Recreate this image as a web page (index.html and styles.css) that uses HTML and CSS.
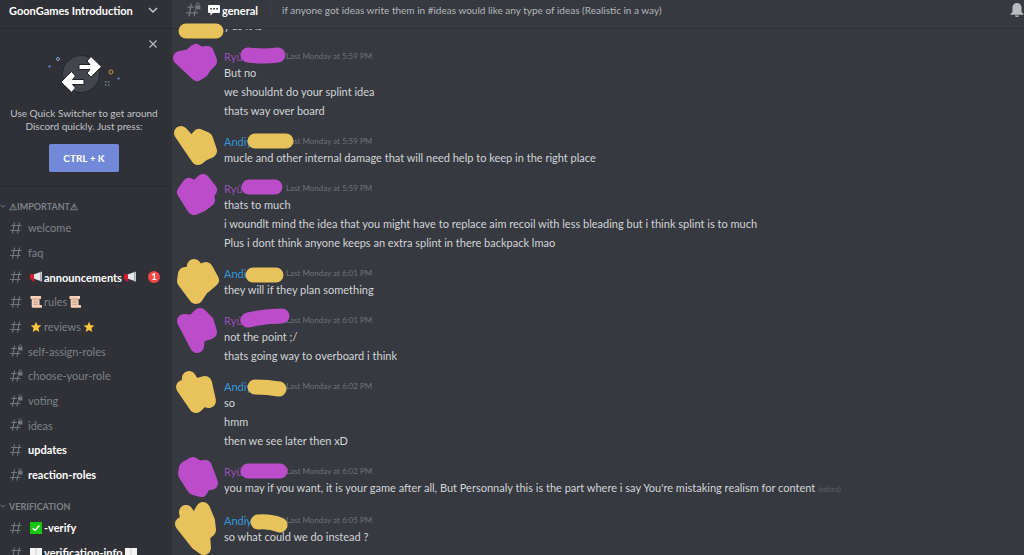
FILE: index.html
```html
<!DOCTYPE html>
<html lang="en">
<head>
    <meta charset="UTF-8">
    <meta name="viewport" content="width=device-width, initial-scale=1.0">
    <title>general - GoonGames Introduction</title>
    <link rel="stylesheet" href="styles.css">
</head>
<body>
    <!-- shared icons -->
    <svg class="sprite" aria-hidden="true">
        <symbol id="hash" viewBox="0 0 14 14">
            <path d="M5.500 1.500L3.500 12.500M10.500 1.500L8.500 12.500M2 4.500H12.500M1 9.500H11.500" fill="none" stroke="currentColor" stroke-width="1.200"/>
        </symbol>
        <symbol id="hash-lock" viewBox="0 0 14 14">
            <path d="M5.500 1.500L3.500 12.500M9 7L8 12.500M2 4.500H8M1 9.500H11.500" fill="none" stroke="currentColor" stroke-width="1.200"/>
            <path d="M9 3h4.500v3.500H9z" fill="currentColor"/>
            <path d="M10 3V2a1.200 1.200 0 0 1 2.400 0v1" fill="none" stroke="currentColor" stroke-width=".8"/>
        </symbol>
        <symbol id="megaphone" viewBox="0 0 12 12">
            <path d="M3.500 3.500L10.500 1V10L3.500 7.500z" fill="#e6e7e8"/>
            <path d="M0 3.300H4V8H0z" fill="#e01b2c"/>
            <path d="M1 7.500h3l.8 3H2z" fill="#be1931"/>
            <path d="M10.500 .800H12v9.600h-1.500z" fill="#c3cad0"/>
        </symbol>
        <symbol id="scroll" viewBox="0 0 12 12">
            <path d="M.5 0h10.500v3H9.500V9h1.500a1.400 1.400 0 0 1 0 2.800H3A1.500 1.500 0 0 1 1.700 10V3H.5z" fill="#f5d3b8"/>
            <path d="M3.500 5h4.500M3.500 6.800h4.500M3.500 8.600h4.500M2 3H9.500" stroke="#a9826a" stroke-width=".6"/>
        </symbol>
        <symbol id="star" viewBox="0 0 12 12">
            <path d="M6 .7l1.500 3.600 3.900.3-3 2.500.9 3.900L6 8.900 2.700 11l.9-3.900-3-2.500 3.900-.3z" fill="#ffc53d"/>
        </symbol>
        <symbol id="check" viewBox="0 0 12 12">
            <path d="M0 0h12v12H0z" fill="#16c60c"/>
            <path d="M2.800 6.200l2.200 2.300 4.300-5" fill="none" stroke="#fff" stroke-width="1.500"/>
        </symbol>
        <symbol id="book" viewBox="0 0 12 12">
            <path d="M0 1h5.500l.5.600.5-.600H12v10H0z" fill="#f4f4f4"/>
            <path d="M6 1.500V11" stroke="#c4c8cc" stroke-width=".8"/>
        </symbol>
        <symbol id="speech" viewBox="0 0 12 12">
            <path d="M1 1h10a1 1 0 0 1 1 1v6a1 1 0 0 1-1 1H5L2.500 11.500V9H1a1 1 0 0 1-1-1V2a1 1 0 0 1 1-1z" fill="#fff"/>
            <path d="M2.300 4h1.500v1.500H2.300zM5.300 4h1.500v1.500H5.300zM8.300 4h1.500v1.500H8.300z" fill="#222428"/>
        </symbol>
        <symbol id="chevron" viewBox="0 0 10 10">
            <path d="M1 3l4 4 4-4" fill="none" stroke="currentColor" stroke-width="1.500"/>
        </symbol>
    </svg>

    <div class="app">
        <aside class="sidebar">
            <button class="server-header">
                <span>GoonGames Introduction</span>
                <svg class="server-arrow"><use href="#chevron"/></svg>
            </button>

            <section class="switcher">
                <button class="close-btn" aria-label="Close">
                    <svg width="8" height="8" viewBox="0 0 8 8"><path d="M.5 .5l7 7M7.500 .5l-7 7" stroke="currentColor" stroke-width="1.200"/></svg>
                </button>
                <svg class="switcher-art" viewBox="0 0 76 42">
                    <circle cx="35" cy="21" r="18.500" fill="#42454b" stroke="#25272b"/>
                    <path d="M33 11.500h11l-3-3.500 4-4.500 10.500 10.300L45 24l-4-4 3-3.500H33z" fill="#fff" stroke="#202225"/>
                    <path d="M38 26.500H26.500l3-3.500-4-4.500L15 29l10.500 10.300 4-4.300-3-3.500H38z" fill="#fff" stroke="#202225"/>
                    <circle cx="12" cy="6" r="1.500" fill="none" stroke="#7fa8d0"/>
                    <circle cx="65" cy="19" r="2" fill="none" stroke="#c99a3c"/>
                    <path d="M3.500 12v3M2 13.500h3M72.500 24v3M71 25.500h3" stroke="#5873b4"/>
                    <path d="M59 29h1.500M62 29h1.500M59 32h1.500M62 32h1.500" stroke="#7fa8d0"/>
                </svg>
                <p>Use Quick Switcher to get around Discord quickly. Just press:</p>
                <button class="key-btn">CTRL + K</button>
            </section>

            <nav>
                <h2 class="category"><svg><use href="#chevron"/></svg>⚠IMPORTANT⚠</h2>
                <ul class="channels">
                    <li><a href="#"><svg class="hash"><use href="#hash"/></svg>welcome</a></li>
                    <li><a href="#"><svg class="hash"><use href="#hash"/></svg>faq</a></li>
                    <li><a href="#" class="unread"><svg class="hash"><use href="#hash"/></svg><svg class="emoji"><use href="#megaphone"/></svg>announcements<svg class="emoji"><use href="#megaphone"/></svg><span class="badge">1</span></a></li>
                    <li><a href="#"><svg class="hash"><use href="#hash"/></svg><svg class="emoji"><use href="#scroll"/></svg>rules<svg class="emoji"><use href="#scroll"/></svg></a></li>
                    <li><a href="#"><svg class="hash"><use href="#hash"/></svg><svg class="emoji"><use href="#star"/></svg>reviews<svg class="emoji"><use href="#star"/></svg></a></li>
                    <li><a href="#"><svg class="hash"><use href="#hash-lock"/></svg>self-assign-roles</a></li>
                    <li><a href="#"><svg class="hash"><use href="#hash-lock"/></svg>choose-your-role</a></li>
                    <li><a href="#"><svg class="hash"><use href="#hash-lock"/></svg>voting</a></li>
                    <li><a href="#"><svg class="hash"><use href="#hash-lock"/></svg>ideas</a></li>
                    <li><a href="#" class="unread"><svg class="hash"><use href="#hash"/></svg>updates</a></li>
                    <li><a href="#" class="unread"><svg class="hash"><use href="#hash-lock"/></svg>reaction-roles</a></li>
                </ul>
                <h2 class="category"><svg><use href="#chevron"/></svg>VERIFICATION</h2>
                <ul class="channels">
                    <li><a href="#" class="unread"><svg class="hash"><use href="#hash"/></svg><svg class="emoji"><use href="#check"/></svg>-verify</a></li>
                    <li><a href="#" class="unread"><svg class="hash"><use href="#hash"/></svg><svg class="emoji"><use href="#book"/></svg>verification-info<svg class="emoji"><use href="#book"/></svg></a></li>
                </ul>
            </nav>
        </aside>

        <main class="chat">
            <header class="chat-header">
                <svg class="hash"><use href="#hash-lock"/></svg>
                <svg class="emoji"><use href="#speech"/></svg>
                <h1>general</h1>
                <p class="topic">if anyone got ideas write them in #ideas would like any type of ideas (Realistic in a way)</p>
                <button class="bell" aria-label="Notifications">
                    <svg width="14" height="14" viewBox="0 0 14 14"><path d="M7 0a4.500 4.500 0 0 1 4.500 4.500V9l2 2v.8H.5V11l2-2V4.500A4.500 4.500 0 0 1 7 0zM5 12.500h4a2 1.500 0 0 1-4 0z" fill="currentColor"/></svg>
                </button>
            </header>
            <svg class="scribble yellow top-mark"><path class="cover" d="M14 3H44"/></svg>

            <div class="messages">
                <article class="message">
                    <p>y as it is</p>
                </article>
                <article class="message">
                    <div class="meta"><span class="author ryu">Ryū</span><time>Last Monday at 5:59 PM</time></div>
                    <p>But no</p>
                    <p>we shouldnt do your splint idea</p>
                    <p>thats way over board</p>
                    <svg class="scribble purple"><path d="M8 9L18 7L24 2L28 5L35 4L38 12L33 17L30 22L25 25Z"/><path class="cover" d="M76 6Q91 8 106 6"/></svg>
                </article>
                <article class="message">
                    <div class="meta"><span class="author andiy">Andiy</span><time>Last Monday at 5:59 PM</time></div>
                    <p>mucle and other internal damage that will need help to keep in the right place</p>
                    <svg class="scribble yellow"><path d="M9 -1L26 24L31 20L38 17L34 5L27 2L20 11Z"/><path class="cover" d="M83 7H114"/></svg>
                </article>
                <article class="message">
                    <div class="meta"><span class="author ryu">Ryū</span><time>Last Monday at 5:59 PM</time></div>
                    <p>thats to much</p>
                    <p>i woundlt mind the idea that you might have to replace aim recoil with less bleading but i think splint is to much</p>
                    <p>Plus i dont think anyone keeps an extra splint in there backpack lmao</p>
                    <svg class="scribble purple"><path d="M12 11L17 4L24 7L31 0L38 9L35 13L36 19L29 24L22 27Z"/><path class="cover" d="M77 6H103"/></svg>
                </article>
                <article class="message">
                    <div class="meta"><span class="author andiy">Andiy</span><time>Last Monday at 6:01 PM</time></div>
                    <p>they will if they plan something</p>
                    <svg class="scribble yellow"><path d="M22 0L27 6L34 3L40 14L33 20L30 22L24 31L12 15L13 8L20 8Z"/><path class="cover" d="M81 9H104"/></svg>
                </article>
                <article class="message">
                    <div class="meta"><span class="author ryu">Ryū</span><time>Last Monday at 6:01 PM</time></div>
                    <p>not the point ;/</p>
                    <p>thats going way to overboard i think</p>
                    <svg class="scribble purple"><path d="M28 2L21 9L12 8L25 33L26 23L38 19L35 9Z"/><path class="cover" d="M76 7Q92 3 110 3"/></svg>
                </article>
                <article class="message">
                    <div class="meta"><span class="author andiy">Andiy</span><time>Last Monday at 6:02 PM</time></div>
                    <p>so</p>
                    <p>hmm</p>
                    <p>then we see later then xD</p>
                    <svg class="scribble yellow"><path d="M17 -1L22 7L33 4L37 22L31 20L24 27L11 8L16 8Z"/><path class="cover" d="M83 8Q96 8 107 10"/></svg>
                </article>
                <article class="message">
                    <div class="meta"><span class="author ryu">Ryū</span><time>Last Monday at 6:02 PM</time></div>
                    <p>you may if you want, it is your game after all, But Personnaly this is the part where i say You're mistaking realism for content <small>(edited)</small></p>
                    <svg class="scribble purple"><path d="M21 0L26 4L33 3L39 19L33 19L29 26L22 24L13 10L14 4Z"/><path class="cover" d="M76 7H108"/></svg>
                </article>
                <article class="message">
                    <div class="meta"><span class="author andiy">Andiy</span><time>Last Monday at 6:05 PM</time></div>
                    <p>so what could we do instead ?</p>
                    <svg class="scribble yellow"><path d="M14 -1L22 12L31 -4L36 8L37 17L31 22L32 35L25 30L10 11L16 10Z"/><path class="cover" d="M86 9Q98 8 108 12"/></svg>
                </article>
            </div>
        </main>
    </div>
</body>
</html>
```
FILE: styles.css
```css
:root {
    --sidebar-color: #2f3136;
    --chat-color: #36393f;
    --line-color: #27292d;
    --muted-color: #7e8288;
    --yellow: #e8c25a;
    --purple: #bc4dca;
}
* {
    box-sizing: border-box;
}
body {
    margin: 0;
    font-family: "Lato", "Liberation Sans", sans-serif;
    font-size: 11px;
    color: #d3d5d8;
    background: var(--chat-color);
}
h1, h2, p, ul {
    margin: 0;
    padding: 0;
}
button {
    padding: 0;
    border: 0;
    font: inherit;
    color: inherit;
    background: none;
    cursor: pointer;
}
.sprite {
    display: none;
}
.app {
    display: flex;
    height: 100vh;
    overflow: hidden;
}

/* sidebar */
.sidebar {
    flex: 0 0 172px;
    overflow: hidden;
    background: var(--sidebar-color);
}
.server-header {
    display: flex;
    align-items: center;
    justify-content: space-between;
    width: 100%;
    height: 29px;
    padding: 0 14px 8px 9px;
    border-bottom: 1px solid var(--line-color);
    font-weight: bold;
    color: #fff;
}
.server-arrow {
    width: 10px;
    height: 10px;
    color: #c4c6c9;
}
.switcher {
    position: relative;
    display: flex;
    flex-direction: column;
    align-items: center;
    height: 158px;
    padding: 24px 12px 0 8px;
    border-bottom: 1px solid var(--line-color);
    text-align: center;
}
.close-btn {
    position: absolute;
    top: 11px;
    right: 15px;
    display: flex;
    color: #b9bbbe;
}
.switcher-art {
    width: 76px;
    height: 42px;
}
.switcher p {
    margin: 12px 0 11px;
    font-size: 10px;
    line-height: 13px;
    color: #c2c4c8;
}
.key-btn {
    width: 70px;
    height: 28px;
    border-radius: 2px;
    font-size: 10px;
    font-weight: bold;
    color: #fff;
    background: #7289da;
}
.category {
    display: flex;
    align-items: center;
    height: 14px;
    margin-top: 12px;
    font-size: 9px;
    font-weight: bold;
    color: var(--muted-color);
}
.category svg {
    width: 6px;
    height: 6px;
    margin-right: 3px;
}
.channels {
    list-style: none;
    padding-top: 2px;
}
.channels li {
    height: 25px;
}
.channels li:nth-child(3n) {
    height: 24px;
}
.channels a {
    display: flex;
    align-items: center;
    height: 100%;
    padding: 0 12px 0 9px;
    color: var(--muted-color);
    text-decoration: none;
}
.channels .unread {
    font-weight: bold;
    color: #fff;
}
.hash {
    width: 14px;
    height: 14px;
    margin-right: 5px;
    color: #72767d;
}
.emoji {
    width: 12px;
    height: 12px;
    margin: 0 2px;
}
.badge {
    width: 12px;
    height: 12px;
    margin-left: auto;
    border-radius: 50%;
    font-size: 9px;
    line-height: 12px;
    text-align: center;
    background: #f04747;
}

/* chat */
.chat {
    position: relative;
    flex: 1;
    display: flex;
    flex-direction: column;
    min-width: 0;
}
.chat-header {
    display: flex;
    flex: 0 0 29px;
    align-items: center;
    padding: 0 0 8px 13px;
    border-bottom: 1px solid #2e3136;
    overflow: hidden;
}
.chat-header .hash {
    width: 16px;
    height: 16px;
}
.chat-header h1 {
    font-size: 11px;
    color: #fff;
}
.topic {
    flex: 1;
    margin-left: 12px;
    padding-left: 11px;
    border-left: 1px solid #3f4248;
    font-size: 10px;
    line-height: 16px;
    white-space: nowrap;
    color: #b4b7bb;
}
.bell {
    display: flex;
    color: #b9bbbe;
}
.messages {
    flex: 1;
    display: flex;
    flex-direction: column;
    justify-content: flex-end;
    gap: 14px;
    padding-bottom: 9px;
    overflow: hidden;
}
.message {
    position: relative;
    padding-left: 52px;
}
.message p {
    line-height: 19px;
}
.message small {
    font-size: 7px;
    color: #5d6066;
}
.meta {
    display: flex;
    align-items: center;
    height: 14px;
}
.author {
    width: 62px;
}
.ryu {
    color: #9650b0;
}
.andiy {
    color: #3498db;
}
time {
    font-size: 8px;
    color: #70747b;
}

/* marker strokes over avatars and names */
.scribble {
    position: absolute;
    top: 0;
    left: 0;
    width: 124px;
    height: 44px;
    overflow: visible;
    stroke-width: 14px;
    stroke-linejoin: round;
    stroke-linecap: round;
    pointer-events: none;
}
.scribble .cover {
    fill: none;
    stroke-width: 15px;
}
.yellow {
    fill: var(--yellow);
    stroke: var(--yellow);
}
.purple {
    fill: var(--purple);
    stroke: var(--purple);
}
.top-mark {
    top: 28px;
    height: 8px;
}
```
